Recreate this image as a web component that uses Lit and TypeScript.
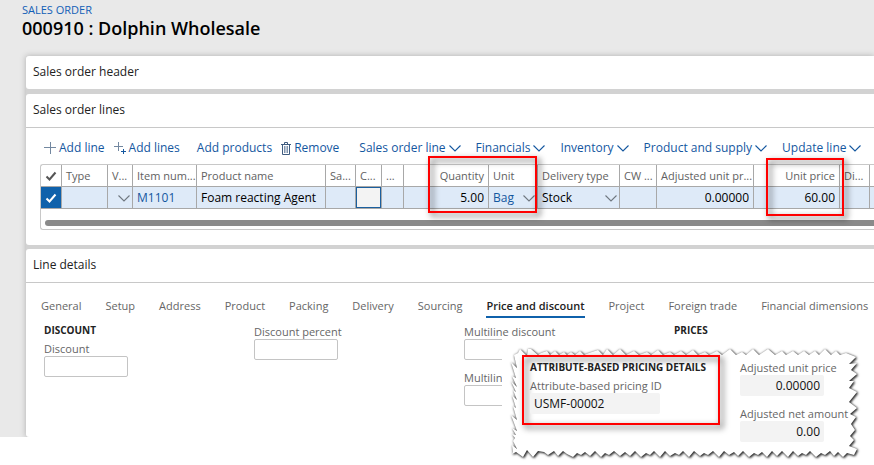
import { LitElement, html, svg, css, nothing } from "lit";
import { customElement } from "lit/decorators.js";

const chevron = html`<svg class="chev" width="12" height="12" viewBox="0 0 12 12" aria-hidden="true">
  <path d="M0.5 3.5 6 9 11.5 3.5" fill="none" stroke="currentColor" stroke-width="1.1" />
</svg>`;

const tick = html`<svg class="tick" width="12" height="12" viewBox="0 0 12 12" aria-hidden="true">
  <path d="M1.5 6.5 4.5 9.5 10.5 2.5" fill="none" stroke="currentColor" stroke-width="2" />
</svg>`;

const plus = html`<svg width="12" height="12" viewBox="0 0 12 12" aria-hidden="true">
  <path d="M6.5 0V12M0 5.5H12" fill="none" stroke="#7388a0" stroke-width="1" />
</svg>`;

const plusMany = html`<svg width="12" height="12" viewBox="0 0 12 12" aria-hidden="true">
  <path d="M4.5 0V9M0 4.5H9" fill="none" stroke="#7388a0" stroke-width="1" />
  <path d="M9.5 7V12M7 9.5H12" fill="none" stroke="#14579f" stroke-width="1" />
</svg>`;

const trash = html`<svg width="10" height="13" viewBox="0 0 10 13" aria-hidden="true">
  <path d="M0 2.5H10M3.5 2.5V0.5H6.5V2.5M1.5 2.5V12.5H8.5V2.5" fill="none" stroke="#3f5c80" stroke-width="1" />
  <path d="M3.5 4V11M5 4V11M6.5 4V11" fill="none" stroke="#8195ae" stroke-width="1" />
</svg>`;

interface Column {
  label: string;
  width: number;
  end?: boolean;
}

const COLUMNS: Column[] = [
  { label: "Type", width: 46 },
  { label: "Variant", width: 25 },
  { label: "Item number", width: 64 },
  { label: "Product name", width: 129 },
  { label: "Sales", width: 30 },
  { label: "CW", width: 26 },
  { label: "", width: 22 },
  { label: "Quantity", width: 85, end: true },
  { label: "Unit", width: 49 },
  { label: "Delivery type", width: 82 },
  { label: "CW unit", width: 37 },
  { label: "Adjusted unit price", width: 97 },
  { label: "Unit price", width: 86, end: true },
  { label: "Discount", width: 30 },
];

const SHORT: Record<string, string> = {
  Variant: "V...",
  "Item number": "Item num...",
  Sales: "Sa...",
  CW: "C...",
  "": "...",
  "CW unit": "CW ...",
  "Adjusted unit price": "Adjusted unit pr...",
  Discount: "Di...",
};

const TABS = [
  "General", "Setup", "Address", "Product", "Packing", "Delivery", "Sourcing",
  "Price and discount", "Project", "Foreign trade", "Financial dimensions",
];

const MENUS = ["Sales order line", "Financials", "Inventory", "Product and supply", "Update line"];

/* Outline of the torn slip, clockwise from the top left corner. */
const TORN =
  "M8 5 10 1 17 8 18 1 21 1 28 7 31 5 37 3 40 7 45 3 49 7 54 4 57 7 61 4 65 7 70 3 74 7 79 5 88 2 93 7 97 1 103 7 110 1 116 7 " +
  "124 3 129 7 137 4 141 7 148 2 153 7 160 4 164 7 171 3 176 7 183 2 188 7 195 4 199 7 207 3 212 7 220 1 226 7 232 4 236 7 " +
  "243 1 249 7 258 1 265 7 272 3 276 7 283 3 288 7 294 3 299 7 305 3 309 7 315 1 321 7 326 3 330 7 336 5 346 9 " +
  "339 16 347 15 341 22 347 26 339 33 344 33 339 40 347 44 339 54 347 60 340 66 346 69 341 76 345 82 340 88 344 92 339 98 " +
  "347 101 344 107 337 105 333 109 328 104 324 108 320 103 315 107 311 105 306 109 300 103 296 107 292 105 288 108 283 103 278 109 272 103 " +
  "267 108 262 103 257 109 252 104 248 107 244 105 239 109 233 103 228 108 224 104 219 107 214 103 209 109 203 103 198 107 194 105 190 108 " +
  "184 103 179 109 173 103 169 107 165 105 160 108 155 103 150 109 144 103 140 107 136 105 131 109 125 103 120 108 115 104 110 108 104 103 " +
  "99 107 95 105 91 109 85 103 80 108 75 104 71 107 67 105 63 109 57 106 53 103 48 108 44 103 38 107 34 104 28 103 23 109 17 102 13 109 6 104 2 106 3 104 " +
  "2 97 7 101 3 93 5 90 2 86 6 87 2 80 7 83 1 67 7 72 3 58 6 60 2 47 7 52 3 42 6 44 1 33 7 39 2 28 6 30 1 14 7 20 4 7Z";

@customElement("app-root")
export class AppRoot extends LitElement {
  static styles = css`
    :host {
      display: block;
      position: relative;
      overflow: hidden;
      padding-bottom: 28px;
      background: #fff;
      color: #1b1b1b;
      font: 12px/16px "Open Sans", "Noto Sans", sans-serif;
    }
    *, *::before { box-sizing: border-box; }
    svg { display: block; flex: none; }
    button, input, select {
      font: inherit;
      color: inherit;
      border: 0;
      margin: 0;
      padding: 0;
      background: none;
      appearance: none;
      border-radius: 0;
      min-width: 0;
    }
    h1, h2, h3 { margin: 0; font-weight: 600; }
    main { background: #e9e9e9; padding: 2px 0 0 26px; overflow: hidden; }
    .titles { margin-left: -4px; height: 54px; }
    .crumb { color: #1160b7; text-decoration: none; display: block; font-size: 11px; line-height: 16px; }
    h1 { font-size: 18px; line-height: 20px; font-weight: 600; color: #000; }

    .stack {
      display: flex;
      flex-direction: column;
      gap: 4px;
      background: #d2d2d2;
      box-shadow: 0 0 6px rgba(0, 0, 0, 0.25);
    }
    .panel { background: #fff; border-radius: 3px 0 0 3px; }
    .panel > h2 { font-size: 12px; font-weight: 500; line-height: 32px; padding: 0 0 1px 7px; color: #222; }
    .closed { margin-bottom: 1px; }
    .open > h2 { border-bottom: 1px solid #c8c8c8; }

    .toolbar { display: flex; align-items: center; padding: 4px 0 0 18px; height: 36px; }
    .toolbar button {
      display: flex;
      align-items: center;
      gap: 3px;
      color: #14579f;
      white-space: nowrap;
      flex: none;
    }
    .actions, .menus { display: flex; flex: none; }
    .actions { gap: 9px; margin-right: 20px; }
    .actions .wide { margin: 0 0 0 8px; }
    .menus { gap: 15px; }

    .gridbox { position: relative; margin-left: 14px; border: 1px solid #c8c8c8; border-right: 0; border-radius: 3px 0 0 3px; height: 66px; }
    .scroll { overflow: hidden; }
    table { border-collapse: separate; border-spacing: 0; table-layout: fixed; width: 860px; min-width: 100%; }
    th, td {
      height: 22px;
      padding: 0 4px;
      border-right: 1px solid #a8a8a8;
      border-bottom: 1px solid #a8a8a8;
      text-align: left;
      font-weight: 400;
      white-space: nowrap;
      overflow: hidden;
      line-height: 20px;
    }
    th { color: #616161; font-size: 11px; }
    td { background: #deeaf8; color: #000; }
    .end { text-align: right; }
    .pick { padding: 0; color: #555; }
    td.pick { background: #0f61ab; color: #fff; }
    .check { display: grid; place-items: center; height: 21px; }
    .check > * { grid-area: 1 / 1; }
    .check input { width: 20px; height: 20px; opacity: 0; }
    td input { width: 100%; display: block; text-align: right; }
    td a { color: #14579f; text-decoration: none; }
    .drop { display: grid; align-items: center; margin-right: -2px; color: #000; }
    .drop > * { grid-area: 1 / 1; }
    .drop .chev { justify-self: end; color: #6f7780; pointer-events: none; }
    .drop select { width: 100%; }
    .drop.link select { color: #14579f; }
    td.focus { padding: 0; }
    td.focus input { height: 21px; background: #f3f3f3; border: 1px solid #1b5f9e; }
    .bar { height: 6px; margin: 11px 0 0 4px; background: #8a8a8a; border-radius: 3px 0 0 3px; }
    .lines { padding-bottom: 15px; }

    .mark { position: absolute; border: 2px solid #f00; filter: drop-shadow(3px 3px 3px rgba(0, 0, 0, 0.7)); pointer-events: none; }
    .mark.qty { left: 387px; top: -9px; width: 109px; height: 57px; }
    .mark.price { left: 725px; top: -7px; width: 78px; height: 58px; }

    .tabs { display: flex; gap: 24px; padding: 14px 0 0 15px; }
    .tabs button { flex: none; font-size: 11px; color: #666; height: 21px; line-height: 18px; padding-bottom: 1px; border-bottom: 2px solid transparent; }
    .tabs button.on { color: #222; font-weight: 600; border-color: #0f61ab; }

    .form { display: grid; grid-template-columns: repeat(4, 210px); padding: 6px 0 31px 18px; }
    .col { display: flex; flex-direction: column; gap: 10px; }
    .field { display: flex; flex-direction: column; align-items: flex-start; }
    .field label { line-height: 15px; font-size: 11px; color: #666; white-space: nowrap; }
    .field input { width: 84px; height: 21px; border: 1px solid #c4c4c4; border-radius: 2px; padding: 0 4px; }
    .field input[readonly] { background: #f3f3f3; border: 0; color: #111; }
    .col h3 { font-size: 10px; font-weight: 700; line-height: 12px; margin-bottom: -5px; white-space: nowrap; color: #222; }

    .slip { position: absolute; left: 502px; top: 338px; right: 0; height: 127px; background: #fff; }
    .torn { position: absolute; left: 8px; top: 10px; filter: drop-shadow(1px 1px 1px #222) drop-shadow(0 0 1px rgba(0, 0, 0, 0.4)); }
    .slipbody { position: relative; display: grid; grid-template-columns: 198px 110px; column-gap: 20px; padding: 17px 0 0 20px; }
    .framed { height: 70px; padding: 4px 6px; border: 2px solid transparent; }
    .frame { position: absolute; left: 20px; top: 17px; width: 198px; height: 70px; border: 2px solid #f00; filter: drop-shadow(3px 3px 3px rgba(0, 0, 0, 0.7)); pointer-events: none; }
    .framed .field input { width: 130px; }
    .slip .amounts { padding-top: 5px; }
    .amounts input { text-align: right; }
  `;

  private field(id: string, label: string, value = "", readonly = false) {
    return html`<div class="field">
      <label for=${id}>${label}</label>
      <input id=${id} type="text" .value=${value} ?readonly=${readonly} />
    </div>`;
  }

  private drop(name: string, value: string, link = false) {
    return html`<div class="drop ${link ? "link" : ""}">
      <select aria-label=${name}><option>${value}</option></select>${chevron}
    </div>`;
  }

  render() {
    return html`
      <main>
        <header class="titles">
          <a class="crumb" href="#">SALES ORDER</a>
          <h1>000910 : Dolphin Wholesale</h1>
        </header>
        <div class="stack">
          <section class="panel closed"><h2>Sales order header</h2></section>
          <section class="panel open lines">
            <h2>Sales order lines</h2>
            <div class="toolbar">
              <div class="actions">
                <button>${plus}Add line</button>
                <button>${plusMany}Add lines</button>
                <button class="wide">Add products</button>
                <button>${trash}Remove</button>
              </div>
              <div class="menus">${MENUS.map((m) => html`<button aria-haspopup="menu">${m}${chevron}</button>`)}</div>
            </div>
            <div class="gridbox">
              <div class="scroll">
                <table>
                  <colgroup>
                    <col width="21" />
                    ${COLUMNS.map((c) => html`<col width=${c.width} />`)}
                    <col />
                  </colgroup>
                  <thead>
                    <tr>
                      <th class="pick"><div class="check">${tick}<input type="checkbox" aria-label="Select all" /></div></th>
                      ${COLUMNS.map((c) => html`<th class=${c.end ? "end" : ""}>${SHORT[c.label] ?? c.label}</th>`)}
                      <th></th>
                    </tr>
                  </thead>
                  <tbody>
                    <tr>
                      <td class="pick"><div class="check">${tick}<input type="checkbox" checked aria-label="Select line" /></div></td>
                      <td></td>
                      <td>${this.drop("Variant", "")}</td>
                      <td><a href="#">M1101</a></td>
                      <td>Foam reacting Agent</td>
                      <td></td>
                      <td class="focus"><input type="text" aria-label="CW" /></td>
                      <td></td>
                      <td><input type="text" aria-label="Quantity" value="5.00" /></td>
                      <td>${this.drop("Unit", "Bag", true)}</td>
                      <td>${this.drop("Delivery type", "Stock")}</td>
                      <td></td>
                      <td><input type="text" aria-label="Adjusted unit price" value="0.00000" /></td>
                      <td><input type="text" aria-label="Unit price" value="60.00" /></td>
                      <td></td>
                      <td></td>
                    </tr>
                  </tbody>
                </table>
              </div>
              <div class="bar"></div>
              <div class="mark qty"></div>
              <div class="mark price"></div>
            </div>
          </section>
          <section class="panel open">
            <h2>Line details</h2>
            <div class="tabs" role="tablist">
              ${TABS.map((t) => {
                const on = t === "Price and discount";
                return html`<button role="tab" aria-selected=${on} class=${on ? "on" : nothing}>${t}</button>`;
              })}
            </div>
            <div class="form">
              <div class="col"><h3>DISCOUNT</h3>${this.field("disc", "Discount")}</div>
              <div class="col">${this.field("pct", "Discount percent")}</div>
              <div class="col">
                ${this.field("multi", "Multiline discount")}
                ${this.field("multipct", "Multiline")}
              </div>
              <div class="col"><h3>PRICES</h3></div>
            </div>
          </section>
        </div>
      </main>
      <aside class="slip">
        <svg class="torn" width="352" height="114" viewBox="0 0 352 114" aria-hidden="true">
          ${svg`<path d=${TORN} fill="#fff" />`}
        </svg>
        <div class="frame"></div>
        <div class="slipbody">
          <div class="col framed">
            <h3>ATTRIBUTE-BASED PRICING DETAILS</h3>
            ${this.field("abp", "Attribute-based pricing ID", "USMF-00002", true)}
          </div>
          <div class="col amounts">
            ${this.field("aup", "Adjusted unit price", "0.00000", true)}
            ${this.field("ana", "Adjusted net amount", "0.00", true)}
          </div>
        </div>
      </aside>
    `;
  }
}
